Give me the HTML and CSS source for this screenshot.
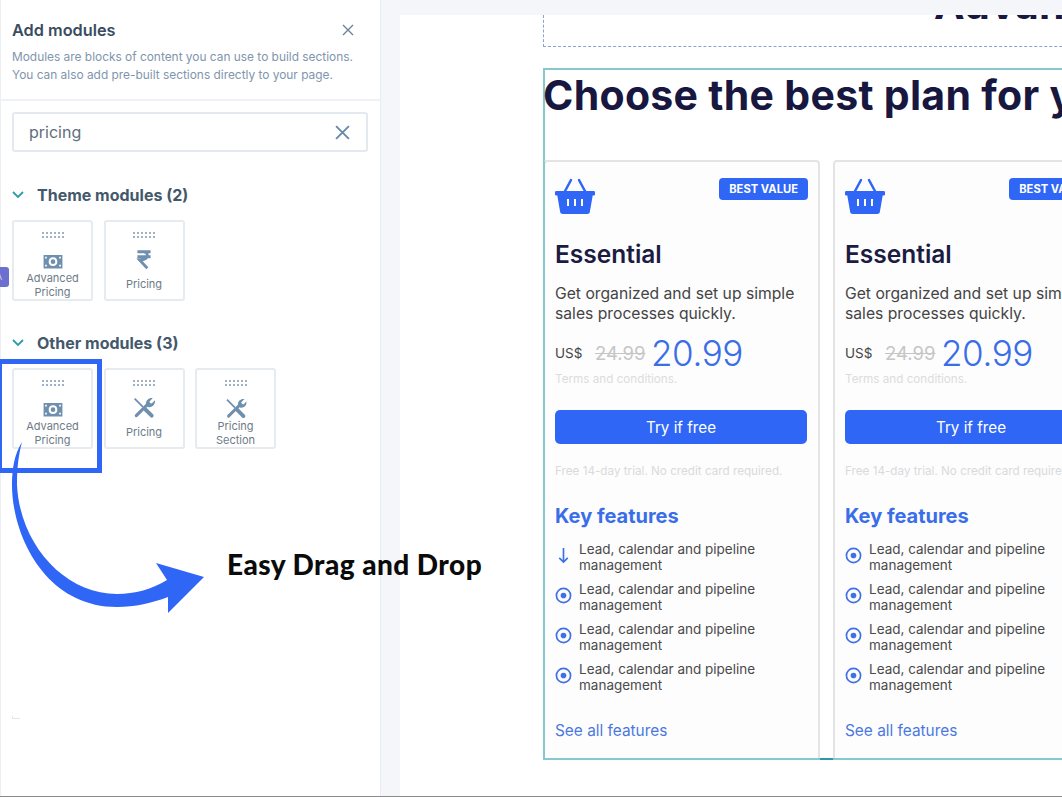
FILE: index.html
```html
<!DOCTYPE html>
<html lang="en">
<head>
    <meta charset="UTF-8">
    <meta name="viewport" content="width=device-width, initial-scale=1.0">
    <title>Add modules</title>
    <link rel="stylesheet" href="styles.css">
</head>
<body>
    <div class="editor">
        <aside class="sidebar">
            <div class="sidebar-head">
                <div class="title-row">
                    <h2>Add modules</h2>
                    <svg class="close-icon" viewBox="0 0 12 12"><path d="M1 1l10 10M11 1L1 11"/></svg>
                </div>
                <p>Modules are blocks of content you can use to build sections.<br>You can also add pre-built sections directly to your page.</p>
            </div>
            <div class="search-box">
                <span>pricing</span>
                <svg class="clear-icon" viewBox="0 0 14 14"><path d="M1 1l12 12M13 1L1 13"/></svg>
            </div>

            <div class="group">
                <h3><svg class="chevron" viewBox="0 0 12 8"><path d="M1 1l5 5 5-5"/></svg>Theme modules (2)</h3>
                <div class="tiles">
                    <div class="tile">
                        <div class="grip"></div>
                        <svg class="tile-icon" viewBox="0 0 20 20"><use href="#money"/></svg>
                        <span>Advanced<br>Pricing</span>
                    </div>
                    <div class="tile single">
                        <div class="grip"></div>
                        <svg class="tile-icon" viewBox="0 0 20 20"><path class="rupee" d="M4 2.500h12M4 7h12M6 2.500c6-.5 7 1.500 7 3 0 3-3 4.500-7 4.500l7 7.500"/></svg>
                        <span>Pricing</span>
                    </div>
                </div>
            </div>

            <div class="group other">
                <h3><svg class="chevron" viewBox="0 0 12 8"><path d="M1 1l5 5 5-5"/></svg>Other modules (3)</h3>
                <div class="tiles">
                    <div class="tile">
                        <div class="grip"></div>
                        <svg class="tile-icon" viewBox="0 0 20 20"><use href="#money"/></svg>
                        <span>Advanced<br>Pricing</span>
                    </div>
                    <div class="tile single">
                        <div class="grip"></div>
                        <svg class="tile-icon" viewBox="0 0 20 20"><use href="#tools"/></svg>
                        <span>Pricing</span>
                    </div>
                    <div class="tile">
                        <div class="grip"></div>
                        <svg class="tile-icon tools" viewBox="0 0 20 20"><use href="#tools"/></svg>
                        <span>Pricing<br>Section</span>
                    </div>
                </div>
            </div>
        </aside>

        <main class="gutter">
            <div class="canvas">
                <div class="prev-section"><span>Advanced Pricing</span></div>
                <section class="pricing">
                    <h1>Choose the best plan for your business</h1>
                    <div class="cards">
                        <article class="card">
                            <div class="card-top">
                                <svg class="basket" viewBox="0 0 40 36"><use href="#basket"/></svg>
                                <span class="badge">BEST VALUE</span>
                            </div>
                            <h4>Essential</h4>
                            <p class="summary">Get organized and set up simple sales processes quickly.</p>
                            <div class="price"><span class="currency">US$</span><s>24.99</s><strong>20.99</strong></div>
                            <p class="terms">Terms and conditions.</p>
                            <button>Try if free</button>
                            <p class="trial">Free 14-day trial. No credit card required.</p>
                            <h5>Key features</h5>
                            <ul>
                                <li><svg viewBox="0 0 18 18"><path class="arrow-down" d="M9 1v15M4.500 11.500L9 16l4.500-4.500"/></svg><span>Lead, calendar and pipeline management</span></li>
                                <li><svg viewBox="0 0 18 18"><use href="#radio"/></svg><span>Lead, calendar and pipeline management</span></li>
                                <li><svg viewBox="0 0 18 18"><use href="#radio"/></svg><span>Lead, calendar and pipeline management</span></li>
                                <li><svg viewBox="0 0 18 18"><use href="#radio"/></svg><span>Lead, calendar and pipeline management</span></li>
                            </ul>
                            <a class="see-all">See all features</a>
                        </article>
                        <article class="card">
                            <div class="card-top">
                                <svg class="basket" viewBox="0 0 40 36"><use href="#basket"/></svg>
                                <span class="badge">BEST VALUE</span>
                            </div>
                            <h4>Essential</h4>
                            <p class="summary">Get organized and set up simple sales processes quickly.</p>
                            <div class="price"><span class="currency">US$</span><s>24.99</s><strong>20.99</strong></div>
                            <p class="terms">Terms and conditions.</p>
                            <button>Try if free</button>
                            <p class="trial">Free 14-day trial. No credit card required.</p>
                            <h5>Key features</h5>
                            <ul>
                                <li><svg viewBox="0 0 18 18"><use href="#radio"/></svg><span>Lead, calendar and pipeline management</span></li>
                                <li><svg viewBox="0 0 18 18"><use href="#radio"/></svg><span>Lead, calendar and pipeline management</span></li>
                                <li><svg viewBox="0 0 18 18"><use href="#radio"/></svg><span>Lead, calendar and pipeline management</span></li>
                                <li><svg viewBox="0 0 18 18"><use href="#radio"/></svg><span>Lead, calendar and pipeline management</span></li>
                            </ul>
                            <a class="see-all">See all features</a>
                        </article>
                    </div>
                </section>
            </div>
        </main>
    </div>

    <!-- things lying over the editor -->
    <div class="side-tab">A</div>
    <div class="faint-mark"></div>
    <div class="highlight"></div>
    <svg class="drag-arrow" viewBox="0 0 210 180" width="210" height="180">
        <path d="M22 2C14 15 12 30 12 45C12 95 45 167 117 167C135 167 152 163 168 157L168 173L204 137L156 123L167 140C152 149 135 154 117 154C65 154 20 105 17 45C17 30 18 17 22 2Z"/>
    </svg>
    <div class="drag-label">Easy Drag and Drop</div>

    <svg class="defs" width="0" height="0">
        <symbol id="money" viewBox="0 0 20 20">
            <path fill="#6f8fae" fill-rule="evenodd" d="M0 3h20v14H0zM10 5.500c-3 0-4.500 2-4.500 4.500s1.500 4.500 4.500 4.500 4.500-2 4.500-4.500-1.500-4.500-4.500-4.500zM1.800 5v1.800h1.800V5zM16.400 5v1.800h1.800V5zM1.800 13.200V15h1.800v-1.800zM16.400 13.200V15h1.800v-1.800z"/>
            <circle cx="10" cy="10" r="2.400" fill="#6f8fae"/>
        </symbol>
        <symbol id="tools" viewBox="0 0 20 20">
            <path fill="none" stroke="#6f8fae" stroke-width="1.600" d="M1.500 1.500L9 9"/>
            <path fill="none" stroke="#6f8fae" stroke-width="3.600" stroke-linecap="round" d="M10.500 10.500L17 17"/>
            <path fill="none" stroke="#6f8fae" stroke-width="2.800" stroke-linecap="round" d="M3 17L13 7"/>
            <path fill="#6f8fae" d="M12 7.500C11 4 13.500 .5 18 1l-3 3 .5 1.500 1.500.5 3-3c.5 4.500-3 7-6.500 6z"/>
        </symbol>
        <symbol id="basket" viewBox="0 0 40 36">
            <path fill="none" stroke="#2f66f6" stroke-width="2.500" stroke-linecap="round" d="M9 15L16 2M31 15L24 2"/>
            <path fill="#2f66f6" fill-rule="evenodd" d="M1.500 13h37a1.500 1.500 0 010 4.500h-.8L35 33a3 3 0 01-3 3H8a3 3 0 01-3-3L2.300 17.500h-.8a1.500 1.500 0 010-4.500zM12 21v7h2v-7zM19 21v7h2v-7zM26 21v7h2v-7z"/>
        </symbol>
        <symbol id="radio" viewBox="0 0 18 18">
            <circle cx="9" cy="9" r="7.500" fill="none" stroke="#3f70e6" stroke-width="1.800"/>
            <circle cx="9" cy="9" r="3" fill="#3f70e6"/>
        </symbol>
    </svg>
</body>
</html>
```

FILE: styles.css
```css
* {
    margin: 0;
    padding: 0;
    box-sizing: border-box;
}

html, body {
    height: 100%;
    overflow: hidden;
}

body {
    position: relative;
    font-family: Inter, Arial, sans-serif;
    background: white;
}

.defs {
    position: absolute;
}

.editor {
    display: flex;
    height: 797px;
    border-bottom: 1px solid #8a8a8a;
}

/* sidebar */
.sidebar {
    width: 381px;
    flex-shrink: 0;
    background: white;
    border-left: 1px solid #eceff3;
    border-right: 1px solid #e9edf2;
}

.sidebar-head {
    height: 101px;
    padding: 20px 11px 0;
    border-bottom: 2px solid #eef1f5;
}

.title-row {
    display: flex;
    justify-content: space-between;
    align-items: center;
    padding-right: 15px;
    margin-bottom: 8px;
}

.title-row h2 {
    font-size: 16.3px;
    line-height: 20px;
    font-weight: 600;
    color: #3a4d60;
}

.close-icon {
    width: 12px;
    height: 12px;
    fill: none;
    stroke: #6d8299;
    stroke-width: 1.4;
}

.sidebar-head p {
    font-size: 11.9px;
    line-height: 18px;
    color: #8096ad;
}

.search-box {
    display: flex;
    justify-content: space-between;
    align-items: center;
    height: 40px;
    margin: 11px 12px 0 11px;
    padding: 0 16px 0 15px;
    border: 2px solid #e4e9ef;
    border-radius: 3px;
    font-size: 16px;
    color: #5f6e7d;
}

.clear-icon {
    width: 15px;
    height: 15px;
    fill: none;
    stroke: #6c8aa6;
    stroke-width: 1.8;
}

.group {
    padding: 33px 0 0 11px;
}

.group.other {
    padding-top: 32px;
}

.group h3 {
    display: flex;
    align-items: center;
    gap: 13px;
    height: 20px;
    margin-bottom: 15px;
    font-size: 16px;
    font-weight: 700;
    color: #44586b;
}

.chevron {
    width: 12px;
    height: 8px;
    fill: none;
    stroke: #2e9bab;
    stroke-width: 1.800;
}

.tiles {
    display: flex;
    gap: 10.5px;
}

.tile {
    display: flex;
    flex-direction: column;
    align-items: center;
    width: 81px;
    height: 81px;
    padding-top: 9px;
    border: 2px solid #e6ebf0;
    border-radius: 3px;
    font-size: 11px;
    line-height: 14px;
    text-align: center;
    color: #6e7b88;
}

.grip {
    width: 24px;
    height: 8px;
    margin-bottom: 13px;
    background: radial-gradient(circle, #9fb1c4 0.9px, transparent 1.1px) 0 0 / 4px 4px;
}

.tile-icon {
    width: 20px;
    height: 20px;
}

.tile.single .grip {
    margin-bottom: 10px;
}

.tile.single .tile-icon {
    height: 22px;
    width: 22px;
    margin-bottom: 6px;
}

.tile-icon.tools {
    width: 22px;
    height: 22px;
    margin: -2px 0 0;
}

.rupee {
    fill: none;
    stroke: #6f8fae;
    stroke-width: 2.600;
}

/* page canvas */
.gutter {
    flex: 1;
    min-width: 0;
    padding: 15px 0 0 19px;
    background: #f5f6fa;
}

.canvas {
    height: 100%;
    padding-left: 143px;
    background: white;
    overflow: hidden;
}

.prev-section {
    width: 800px;
    height: 32px;
    border: 1px dashed #8ea0cf;
    border-top: none;
    overflow: hidden;
    padding-left: 390px;
}

.prev-section span {
    display: block;
    margin-top: -36px;
    font-size: 41px;
    line-height: 50px;
    font-weight: 700;
    letter-spacing: 0.3px;
    color: #17173f;
    white-space: nowrap;
}

.pricing {
    position: relative;
    width: 800px;
    height: 692px;
    margin-top: 21px;
    border: 2px solid #86c9cd;
    border-width: 2px 0 2px 2px;
}

/* darker join under the gap between the cards */
.pricing::after {
    content: "";
    position: absolute;
    left: 275px;
    bottom: -2px;
    width: 13px;
    height: 2px;
    background: #2a9aa8;
}

.pricing h1 {
    height: 90px;
    margin-left: -2px;
    font-size: 41px;
    line-height: 50px;
    font-weight: 700;
    letter-spacing: 0.3px;
    color: #17173f;
    white-space: nowrap;
}

.cards {
    display: flex;
    gap: 13px;
    height: 598px;
    margin-left: -2px;
}

.card {
    width: 277px;
    flex-shrink: 0;
    padding: 16px 10px 0;
    background: #fdfdfe;
    border: 2px solid #e4e4e4;
    border-bottom: none;
    border-radius: 4px 4px 0 0;
}

.card:first-child {
    border-left-color: #86c9cd;
}

.card-top {
    display: flex;
    justify-content: space-between;
    align-items: flex-start;
    height: 36px;
}

.basket {
    width: 40px;
    height: 36px;
}

.badge {
    padding: 0 10px;
    height: 22px;
    line-height: 22px;
    background: #2f66f6;
    border-radius: 4px;
    font-size: 11.2px;
    font-weight: 700;
    color: white;
}

.card h4 {
    margin-top: 25px;
    font-size: 24.5px;
    line-height: 30px;
    font-weight: 600;
    color: #1c1c42;
}

.summary {
    margin-top: 15px;
    font-size: 15.7px;
    line-height: 20px;
    color: #444;
}

.price {
    display: flex;
    align-items: center;
    height: 37px;
    margin-top: 10px;
}

.currency {
    width: 40px;
    font-size: 13.5px;
    color: #444;
}

.price s {
    width: 58px;
    font-size: 18.5px;
    color: #c6c6c6;
}

.price strong {
    margin-left: -2px;
    font-size: 35px;
    font-weight: 300;
    letter-spacing: -0.4px;
    color: #3a6ee8;
}

.terms {
    font-size: 11.7px;
    line-height: 16px;
    color: #dcdcdc;
}

.card button {
    display: block;
    width: 252px;
    height: 34px;
    margin-top: 23px;
    background-color: #2f66f6;
    color: white;
    border: none;
    border-radius: 5px;
    font-family: inherit;
    font-size: 15.2px;
}

.trial {
    margin-top: 19px;
    font-size: 11.7px;
    line-height: 16px;
    color: #dadada;
}

.card h5 {
    margin-top: 24px;
    font-size: 20px;
    line-height: 26px;
    font-weight: 700;
    color: #3a6ee8;
}

.card ul {
    list-style: none;
    margin-top: 8px;
}

.card li {
    display: flex;
    align-items: center;
    gap: 7px;
    height: 40px;
    font-size: 13.5px;
    line-height: 16px;
    color: #4a4a4a;
}

.card li svg {
    width: 17px;
    height: 17px;
    flex-shrink: 0;
    margin-bottom: 4px;
}

.card li span {
    width: 190px;
}

.arrow-down {
    fill: none;
    stroke: #3f70e6;
    stroke-width: 1.800;
}

.see-all {
    display: block;
    margin-top: 23px;
    font-size: 15.4px;
    line-height: 22px;
    color: #4a78e0;
}

/* overlays */
.side-tab {
    position: absolute;
    left: -1px;
    top: 267px;
    width: 10px;
    height: 20px;
    background: #6a6fd0;
    border-radius: 0 3px 3px 0;
    font-size: 9px;
    line-height: 20px;
    text-align: left;
    color: #c9cbf2;
    overflow: hidden;
    text-indent: -3px;
}

.faint-mark {
    position: absolute;
    left: 12px;
    top: 716px;
    width: 8px;
    height: 3px;
    border-left: 1px solid #e2e6ea;
    border-bottom: 1px solid #e2e6ea;
}

.highlight {
    position: absolute;
    left: -3px;
    top: 359px;
    width: 105px;
    height: 114px;
    border: 5px solid #2f66f6;
}

.drag-arrow {
    position: absolute;
    left: 0;
    top: 440px;
    fill: #2f66f6;
}

.drag-label {
    position: absolute;
    left: 227px;
    top: 548px;
    font-family: Lato, Arial, sans-serif;
    font-size: 28px;
    line-height: 32px;
    font-weight: 900;
    letter-spacing: 0.45px;
    color: #0b0b0b;
    white-space: nowrap;
}
```
